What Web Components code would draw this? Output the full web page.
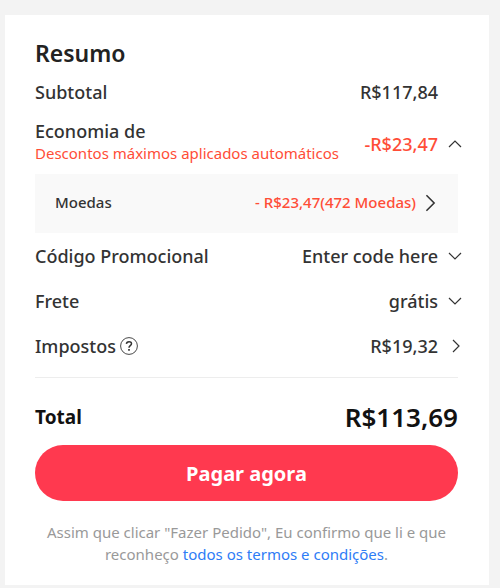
<!DOCTYPE html>
<html lang="pt-BR">
<head>
<meta charset="utf-8">
<meta name="viewport" content="width=device-width, initial-scale=1">
<title>Resumo</title>
<style>
  body{margin:0;padding:15px 11px 0 5px;background:#f3f3f3;color:#222;font-family:"Noto Sans","Open Sans",sans-serif}
</style>
</head>
<body>
<order-summary heading="Resumo">
  <summary-row label="Subtotal" value="R$117,84"></summary-row>
  <summary-row label="Economia de" note="Descontos máximos aplicados automáticos" value="-R$23,47" icon="up" accent></summary-row>
  <discount-panel label="Moedas" value="- R$23,47(472 Moedas)"></discount-panel>
  <summary-row label="Código Promocional" value="Enter code here" icon="down"></summary-row>
  <summary-row label="Frete" value="grátis" icon="down"></summary-row>
  <summary-row label="Impostos" value="R$19,32" icon="right"><help-button></help-button></summary-row>
  <order-total slot="footer" label="Total" value="R$113,69"></order-total>
  <pay-button slot="footer">Pagar agora</pay-button>
  <order-terms slot="footer" href="#termos" link="todos os termos e condições">Assim que clicar "Fazer Pedido", Eu confirmo que li e que reconheço</order-terms>
</order-summary>
<script>
const CHEVRONS = {
  up: "M1 10 7 4l6 6",
  down: "M1 4l6 6 6-6",
  right: "M5 1l6 6-6 6",
};
const chevron = (dir) => `<svg width="14" height="14" viewBox="0 0 14 14" fill="none" stroke="#333" stroke-width="1.2" aria-hidden="true"><path d="${CHEVRONS[dir]}"/></svg>`;

class OrderSummary extends HTMLElement {
  constructor() { super(); this.attachShadow({ mode: "open" }); }
  connectedCallback() {
    this.shadowRoot.innerHTML = `
      <style>
        :host{display:block;background:#fff;padding:22px 31px 20px 30px}
        h2{margin:0;font-size:23px;line-height:32px;font-weight:600}
        .rows{padding-bottom:9px;border-bottom:1px solid #ededed}
      </style>
      <h2>${this.getAttribute("heading")}</h2>
      <div class="rows"><slot></slot></div>
      <slot name="footer"></slot>`;
  }
}

class SummaryRow extends HTMLElement {
  constructor() { super(); this.attachShadow({ mode: "open" }); }
  connectedCallback() {
    const a = (n) => this.getAttribute(n);
    const icon = a("icon");
    this.shadowRoot.innerHTML = `
      <style>
        :host{display:flex;justify-content:space-between;align-items:center;min-height:45px;color:#333;font-size:18px;line-height:24px;font-weight:500}
        :host([accent]){padding:4px 0 11px}
        .label{display:flex;align-items:center;gap:4px}
        .note{font-size:15px;line-height:20px;font-weight:400;color:#ff4d37}
        .value{font:inherit;color:inherit;white-space:nowrap;margin-right:20px}
        button.value{display:flex;align-items:center;gap:10px;margin:0 -4px 0 0;padding:0;border:0;background:none;cursor:pointer}
        :host([accent]) .value{padding-top:6px;color:#ff4d37}
      </style>
      <div>
        <div class="label">${a("label")}<slot></slot></div>
        ${a("note") ? `<div class="note">${a("note")}</div>` : ""}
      </div>
      ${icon ? `<button class="value" type="button">${a("value")}${chevron(icon)}</button>` : `<span class="value">${a("value")}</span>`}`;
  }
}

class HelpButton extends HTMLElement {
  constructor() { super(); this.attachShadow({ mode: "open" }); }
  connectedCallback() {
    this.shadowRoot.innerHTML = `
      <style>
        :host{display:block}
        button{display:block;padding:0;border:0;background:none;cursor:pointer}
        svg{display:block}
      </style>
      <button type="button" aria-label="Ajuda">
        <svg width="18" height="18" viewBox="0 0 18 18" fill="none" stroke="#333">
          <circle cx="9" cy="9" r="8.4" stroke-width=".9"/>
          <path d="M6.4 6.9C6.6 4 11.6 3.9 11.5 6.8c0 1.9-2.5 1.9-2.5 4" stroke-width="1.5"/>
          <path d="M9 12v1.7" stroke-width="1.7"/>
        </svg>
      </button>`;
  }
}

class DiscountPanel extends HTMLElement {
  constructor() { super(); this.attachShadow({ mode: "open" }); }
  connectedCallback() {
    this.shadowRoot.innerHTML = `
      <style>
        :host{display:flex;justify-content:space-between;align-items:center;padding:18px 20px 20px;line-height:21px;background:#f9f9f9;color:#333;font-size:15px;font-weight:500}
        button{display:flex;align-items:center;gap:4px;padding:0;border:0;background:none;color:#ff4d37;font:inherit;white-space:nowrap;cursor:pointer}
        svg{width:18px;height:18px}
      </style>
      <span>${this.getAttribute("label")}</span>
      <button type="button">${this.getAttribute("value")}${chevron("right")}</button>`;
  }
}

class OrderTotal extends HTMLElement {
  constructor() { super(); this.attachShadow({ mode: "open" }); }
  connectedCallback() {
    this.shadowRoot.innerHTML = `
      <style>
        :host{display:flex;justify-content:space-between;align-items:center;padding:21px 0 10px;line-height:36px;color:#111}
        .label{font-size:19px;font-weight:700}
        .value{font-size:26px;font-weight:600}
      </style>
      <span class="label">${this.getAttribute("label")}</span>
      <span class="value">${this.getAttribute("value")}</span>`;
  }
}

class PayButton extends HTMLElement {
  constructor() { super(); this.attachShadow({ mode: "open" }); }
  connectedCallback() {
    this.shadowRoot.innerHTML = `
      <style>
        :host{display:block}
        button{display:block;width:100%;height:56px;padding:0;border:0;border-radius:28px;background:#ff394f;color:#fff;font:inherit;font-size:20px;font-weight:700;cursor:pointer}
      </style>
      <button type="button"><slot></slot></button>`;
  }
}

class OrderTerms extends HTMLElement {
  constructor() { super(); this.attachShadow({ mode: "open" }); }
  connectedCallback() {
    this.shadowRoot.innerHTML = `
      <style>
        :host{display:block;margin-top:20px;text-align:center;font-size:15px;line-height:22px;color:#999}
        a{color:#2e7cf6;text-decoration:none}
      </style>
      <slot></slot> <a href="${this.getAttribute("href")}">${this.getAttribute("link")}</a>.`;
  }
}

customElements.define("order-summary", OrderSummary);
customElements.define("summary-row", SummaryRow);
customElements.define("help-button", HelpButton);
customElements.define("discount-panel", DiscountPanel);
customElements.define("order-total", OrderTotal);
customElements.define("pay-button", PayButton);
customElements.define("order-terms", OrderTerms);
</script>
</body>
</html>
